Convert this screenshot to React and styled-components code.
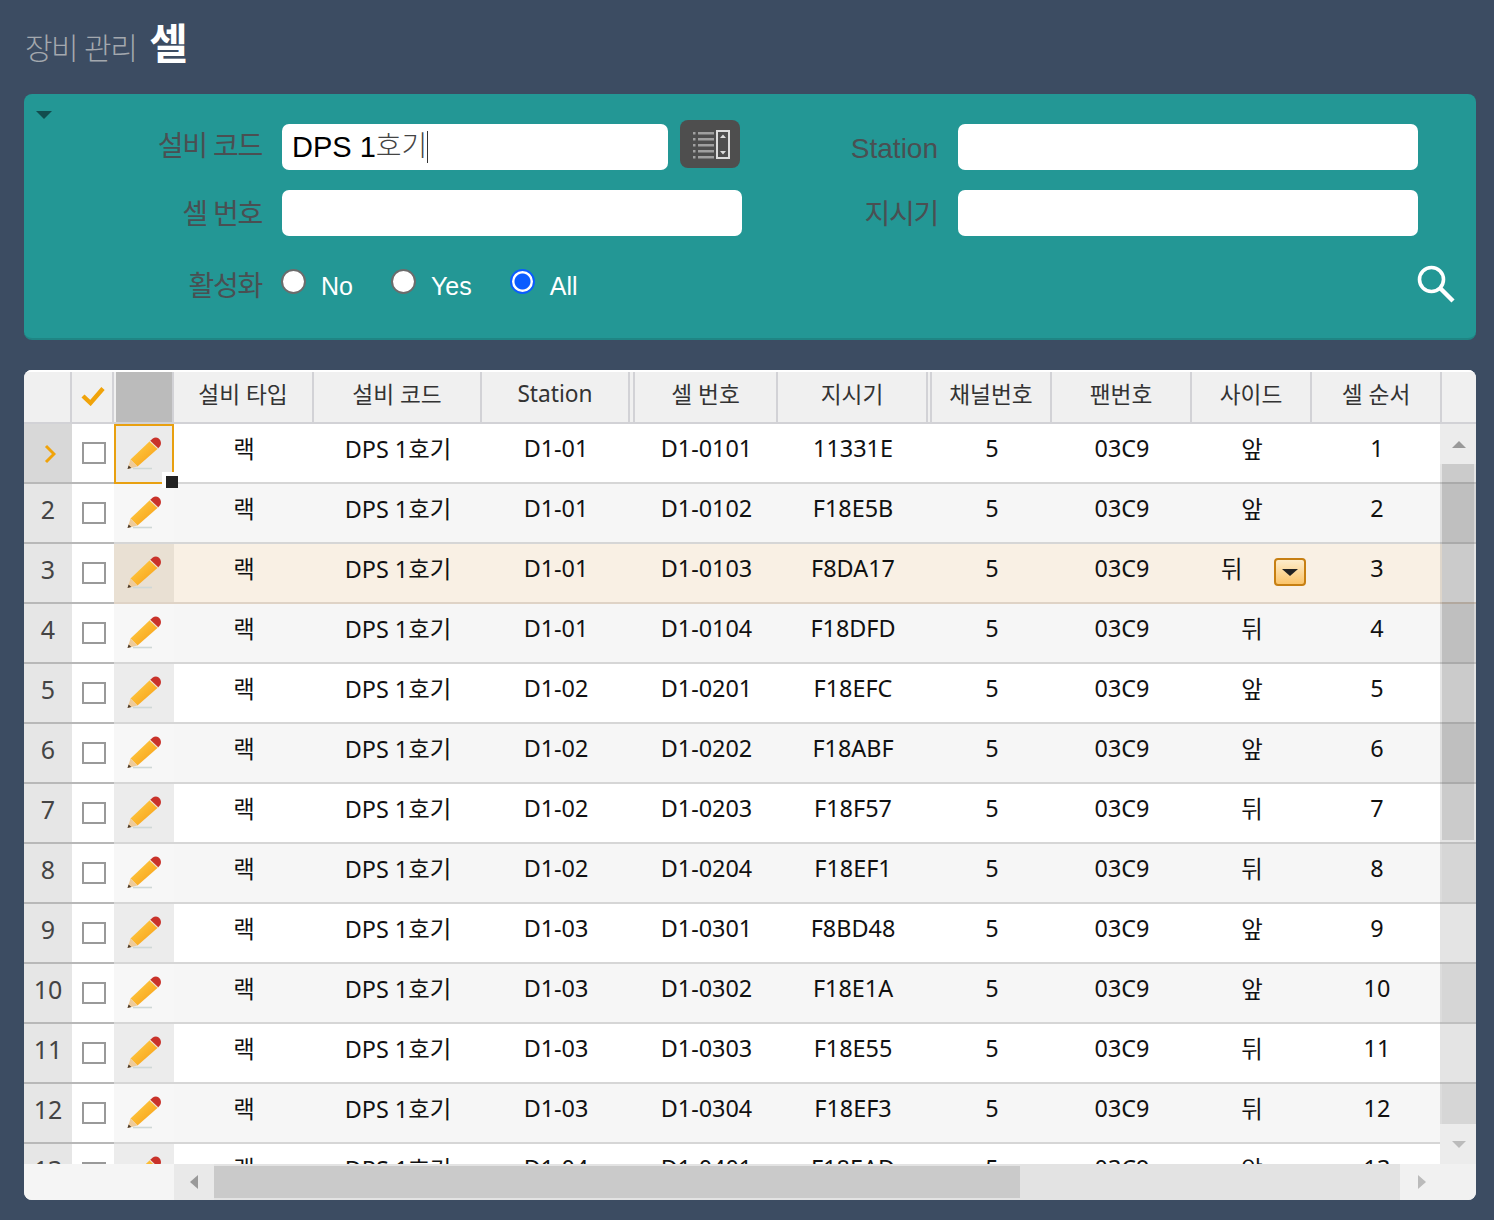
import React from "react";
import styled, { createGlobalStyle, css } from "styled-components";

const GlobalStyle = createGlobalStyle`
  html, body { margin: 0; padding: 0; background: #3c4c62; }
  * { box-sizing: border-box; }
`;

const LABEL_FONT = `"Liberation Sans", "Noto Sans CJK KR", sans-serif`;
const GRID_FONT = `"Noto Sans", "Noto Sans CJK KR", sans-serif`;
const COLS = "48px 42px 60px 140px 168px 148px 5px 143px 150px 4px 120px 140px 120px 130px 34px";

const Page = styled.div`
  width: 1494px;
  height: 1220px;
  padding: 0 18px 20px 24px;
  background: #3c4c62;
  display: flex;
  flex-direction: column;
`;
const Title = styled.h1`
  height: 94px;
  margin: 0;
  padding: 10px 0 0 1px;
  display: flex;
  align-items: baseline;
  gap: 13px;
  font-family: ${LABEL_FONT};
`;
const Crumb = styled.span`
  font-size: 30px;
  font-weight: 300;
  letter-spacing: -1.5px;
  color: #a3a8ae;
`;
const Current = styled.span`
  font-size: 42px;
  font-weight: 700;
  letter-spacing: -1px;
  color: #ffffff;
`;
const Panel = styled.section`
  position: relative;
  height: 246px;
  padding: 30px 21px 0 0;
  background: #239795;
  border-bottom: 2px solid #1f8584;
  border-radius: 8px;
  display: grid;
  grid-template-columns: 238px 460px 176px 460px 1fr;
  grid-auto-rows: 46px;
  column-gap: 20px;
  row-gap: 20px;
  font-family: ${LABEL_FONT};
`;
const Collapse = styled.span`
  position: absolute;
  left: 12px;
  top: 17px;
  width: 0;
  height: 0;
  border-left: 8px solid transparent;
  border-right: 8px solid transparent;
  border-top: 8px solid #124c4e;
`;
const Label = styled.label`
  justify-self: end;
  align-self: center;
  font-size: 28px;
  letter-spacing: ${(p) => (p.$latin ? "0" : "-1.3px")};
  color: #4a4f52;
  padding-top: ${(p) => (p.$tight ? "0" : "4px")};
  line-height: 46px;
`;
const FieldGroup = styled.div`
  display: flex;
  align-items: flex-start;
  gap: 12px;
`;
const Field = styled.div`
  width: ${(p) => p.$width || 460}px;
  height: 46px;
  padding-left: 10px;
  background: #ffffff;
  border-radius: 7px;
  display: flex;
  align-items: center;
  font-size: 29px;
  color: #000000;
  white-space: pre;
`;
const Composing = styled.span`
  font-weight: 300;
  font-size: 28px;
  color: #444444;
  border-right: 1px solid #333333;
  line-height: 32px;
`;
const ListButton = styled.button`
  width: 60px;
  height: 48px;
  margin-top: -4px;
  padding: 0;
  border: 0;
  border-radius: 8px;
  background: #4e4e4e;
  display: flex;
  align-items: center;
  justify-content: center;
`;
const RadioLine = styled.div`
  grid-column: 2 / 4;
  margin-top: 13px;
  margin-left: -1px;
  display: flex;
  gap: 38px;
  align-items: center;
`;
const RadioItem = styled.label`
  display: flex;
  align-items: center;
  gap: 15px;
  color: #ffffff;
  font-size: 25px;
`;
const RadioMark = styled.span`
  width: 25px;
  height: 25px;
  margin-top: -8px;
  border-radius: 50%;
  background: #ffffff;
  border: 2px solid #6c6c6c;
  ${(p) =>
    p.$checked &&
    css`
      border: 2px solid #0a5cff;
      background: radial-gradient(circle, #0a5cff 0 7.5px, #ffffff 8.5px);
    `}
`;
const RadioText = styled.span`
  line-height: 30px;
`;
const LabelLow = styled(Label)`
  margin-top: 11px;
`;
const SearchButton = styled.button`
  grid-column: 4 / 6;
  justify-self: end;
  margin-top: 9px;
  padding: 0;
  width: 38px;
  height: 38px;
  background: none;
  border: 0;
`;

const Grid = styled.section`
  margin-top: 30px;
  height: 830px;
  border-radius: 8px;
  overflow: hidden;
  background: #f5f5f5;
  font-family: ${GRID_FONT};
`;
const HeaderRow = styled.div`
  height: 54px;
  display: grid;
  grid-template-columns: ${COLS};
  background: #f0f0f0;
  border-top: 2px solid #ffffff;
  border-bottom: 2px solid #d2d2d6;
`;
const HeaderCell = styled.div`
  display: flex;
  align-items: center;
  justify-content: center;
  padding-bottom: 8px;
  font-size: 22.7px;
  color: #333333;
  border-right: 2px solid #d2d2d6;
`;
const HeaderEdit = styled(HeaderCell)`
  padding: 0 0 0 2px;
  align-items: stretch;
`;
const HeaderCheck = styled(HeaderCell)`
  padding: 0 0 2px 2px;
`;
const GrayBlock = styled.div`
  width: 56px;
  background: #bbbbbb;
`;
const HeaderFill = styled.div``;
const Body = styled.div`
  position: relative;
  height: 740px;
  overflow: hidden;
  background: #ffffff;
`;
const Row = styled.div`
  height: 60px;
  display: grid;
  grid-template-columns: ${COLS};
  background: ${(p) => (p.$active ? "#f9f0e4" : p.$alt ? "#f6f6f6" : "#ffffff")};
  border-bottom: 2px solid ${(p) => (p.$active ? "#dfd3c6" : "#d6d6d6")};
`;
const lead = css`
  height: 60px;
  border-bottom: 2px solid #b8b8b8;
  display: flex;
  align-items: center;
  justify-content: center;
`;
const RowHead = styled.div`
  ${lead}
  background: ${(p) => (p.$current ? "#d8d8d8" : "#e6e6e6")};
  padding: ${(p) => (p.$current ? "2px 0 0 4px" : "0 0 8px")};
  font-size: 25px;
  color: #444444;
`;
const CheckCell = styled.div`
  ${lead}
  background: #ffffff;
`;
const Checkbox = styled.span`
  width: 24px;
  height: 22px;
  margin-left: 2px;
  background: #ffffff;
  border: 2px solid #999999;
`;
const EditCell = styled.div`
  position: relative;
  height: ${(p) => (p.$selected ? "60px" : "58px")};
  z-index: ${(p) => (p.$selected ? 2 : "auto")};
  display: flex;
  align-items: center;
  justify-content: center;
  padding: 0 0 0 2px;
  background: ${(p) => (p.$active ? "#e9e0d3" : p.$selected ? "#ebebeb" : p.$alt ? "#f7f7f7" : "#ececec")};
  border: ${(p) => (p.$selected ? "2px solid #e8a010" : "0")};
`;
const Handle = styled.span`
  position: absolute;
  right: -6px;
  bottom: -6px;
  width: 16px;
  height: 16px;
  background: #222222;
  border: solid #ffffff;
  border-width: 4px 0 0 4px;
`;
const DataCell = styled.div`
  display: flex;
  align-items: center;
  justify-content: center;
  padding-bottom: 12px;
  font-size: 23.4px;
  color: #111111;
`;
const EditingCell = styled(DataCell)`
  justify-content: space-between;
  padding: 0 6px 12px 29px;
`;
const Combo = styled.span`
  width: 32px;
  height: 28px;
  margin-top: 8px;
  border: 2px solid #c77f12;
  border-radius: 4px;
  background: linear-gradient(#fdeccb, #fbc46a);
  display: flex;
  align-items: center;
  justify-content: center;
  &::after {
    content: "";
    border-left: 8px solid transparent;
    border-right: 8px solid transparent;
    border-top: 7px solid #222222;
  }
`;
const Spacer = styled.div``;
const Fill = styled.div`
  height: 58px;
  background: ${(p) => (p.$alt ? "#f0f0f0" : "#ffffff")};
`;

const VBar = styled.div`
  position: absolute;
  top: 0;
  right: 0;
  bottom: 0;
  width: 36px;
  display: flex;
  flex-direction: column;
  z-index: 1;
`;
const VEnd = styled.div`
  height: 40px;
  background: #ececec;
  display: flex;
  justify-content: center;
  padding: 17px 0 0 2px;
`;
const Arrow = styled.span`
  width: 0;
  height: 0;
  ${(p) =>
    p.$dir === "up" &&
    css`
      border-left: 7px solid transparent;
      border-right: 7px solid transparent;
      border-bottom: 7px solid #999999;
    `}
  ${(p) =>
    p.$dir === "down" &&
    css`
      border-left: 7px solid transparent;
      border-right: 7px solid transparent;
      border-top: 7px solid #bbbbbb;
    `}
  ${(p) =>
    p.$dir === "left" &&
    css`
      border-top: 7px solid transparent;
      border-bottom: 7px solid transparent;
      border-right: 8px solid #999999;
    `}
  ${(p) =>
    p.$dir === "right" &&
    css`
      border-top: 7px solid transparent;
      border-bottom: 7px solid transparent;
      border-left: 8px solid #bbbbbb;
    `}
`;
const VTrack = styled.div`
  height: 660px;
  background: rgba(0, 0, 0, 0.105);
`;
const VThumb = styled.div`
  height: 376px;
  margin: 0 2px;
  background: rgba(0, 0, 0, 0.105);
`;
const HBar = styled.div`
  height: 36px;
  display: flex;
`;
const HCorner = styled.div`
  width: 150px;
  background: #f5f5f5;
`;
const HLeft = styled.div`
  width: 40px;
  background: #e9e9e9;
  display: flex;
  align-items: center;
  padding-left: 16px;
`;
const HTrack = styled.div`
  width: 1186px;
  padding: 2px 0;
  background: #e3e3e3;
`;
const HThumb = styled.div`
  width: 806px;
  height: 100%;
  background: #cacaca;
`;
const HRight = styled.div`
  width: 76px;
  background: #f1f1f1;
  display: flex;
  align-items: center;
  padding-left: 18px;
`;

const PencilIcon = () => (
  <svg width="36" height="34" viewBox="0 0 36 34" aria-hidden="true">
    <defs>
      <linearGradient id="pb" x1="0" y1="0" x2="1" y2="1">
        <stop offset="0" stopColor="#ffd24a" />
        <stop offset="1" stopColor="#f79a12" />
      </linearGradient>
    </defs>
    <path d="M6 31.5H25" stroke="#cfd8d6" strokeWidth="1.6" />
    <path d="M3.5 22.5 L23 4 L31 11.5 L10.5 29.5 Z" fill="url(#pb)" />
    <path d="M0.5 32 L3.5 22.5 L10.5 29.5 Z" fill="#eecb9a" />
    <path d="M0.5 32 L1.6 28.4 L4.4 31 Z" fill="#4a3a2a" />
    <path d="M23 4 L25.8 1.6 Q27 .5 29 .5 Q33.5 1 34 6 Q34 8 32.8 9.6 L31 11.5 Z" fill="#c9322a" />
    <path d="M22.4 4.6 L30.4 12 L31.2 11.2 L23.3 3.8 Z" fill="#efe3d2" />
  </svg>
);
const CheckMark = () => (
  <svg width="24" height="20" viewBox="0 0 24 20" aria-hidden="true">
    <path d="M2 10 L9.5 17 L22 2.5" fill="none" stroke="#f0a30a" strokeWidth="4.4" />
  </svg>
);
const Chevron = () => (
  <svg width="12" height="20" viewBox="0 0 12 20" aria-hidden="true">
    <path d="M2 2 L10 10 L2 18" fill="none" stroke="#f0a30a" strokeWidth="3" />
  </svg>
);
const ListIcon = () => (
  <svg width="40" height="34" viewBox="0 0 40 34" aria-hidden="true">
    {[5, 11, 17, 23, 29].map((y) => (
      <g key={y}>
        <rect x="3" y={y} width="2.5" height="2.5" fill="#a0a0a0" />
        <rect x="8" y={y} width="16" height="2.5" fill="#a0a0a0" />
      </g>
    ))}
    <rect x="27" y="4" width="12" height="27" fill="none" stroke="#dcdcdc" strokeWidth="2" />
    <path d="M30 11 L33 7.5 L36 11 Z M30 24 L33 27.5 L36 24 Z" fill="#dcdcdc" />
  </svg>
);
const SearchIcon = () => (
  <svg width="38" height="38" viewBox="0 0 38 38" aria-hidden="true">
    <circle cx="14.5" cy="14.5" r="12" fill="none" stroke="#ffffff" strokeWidth="3.6" />
    <path d="M23.5 23.5 L36 36" stroke="#ffffff" strokeWidth="4.4" />
  </svg>
);

const HEAD = ["설비 타입", "설비 코드", "Station", null, "셀 번호", "지시기", null, "채널번호", "팬번호", "사이드", "셀 순서"];
const RAW = [
  ["D1-01", "D1-0101", "11331E", "앞"],
  ["D1-01", "D1-0102", "F18E5B", "앞"],
  ["D1-01", "D1-0103", "F8DA17", "뒤"],
  ["D1-01", "D1-0104", "F18DFD", "뒤"],
  ["D1-02", "D1-0201", "F18EFC", "앞"],
  ["D1-02", "D1-0202", "F18ABF", "앞"],
  ["D1-02", "D1-0203", "F18F57", "뒤"],
  ["D1-02", "D1-0204", "F18EF1", "뒤"],
  ["D1-03", "D1-0301", "F8BD48", "앞"],
  ["D1-03", "D1-0302", "F18E1A", "앞"],
  ["D1-03", "D1-0303", "F18E55", "뒤"],
  ["D1-03", "D1-0304", "F18EF3", "뒤"],
  ["D1-04", "D1-0401", "F18EAD", "앞"],
];

export default function App() {
  return (
    <Page>
      <GlobalStyle />
      <Title>
        <Crumb>장비 관리</Crumb>
        <Current>셀</Current>
      </Title>
      <Panel>
        <Collapse />
        <Label $tight>설비 코드</Label>
        <FieldGroup>
          <Field $width={386}>
            DPS 1<Composing>호기</Composing>
          </Field>
          <ListButton aria-label="목록">
            <ListIcon />
          </ListButton>
        </FieldGroup>
        <Label $latin>Station</Label>
        <Field />
        <span />
        <Label>셀 번호</Label>
        <Field />
        <Label>지시기</Label>
        <Field />
        <span />
        <LabelLow>활성화</LabelLow>
        <RadioLine>
          <RadioItem>
            <RadioMark />
            <RadioText>No</RadioText>
          </RadioItem>
          <RadioItem>
            <RadioMark />
            <RadioText>Yes</RadioText>
          </RadioItem>
          <RadioItem>
            <RadioMark $checked />
            <RadioText>All</RadioText>
          </RadioItem>
        </RadioLine>
        <SearchButton aria-label="검색">
          <SearchIcon />
        </SearchButton>
      </Panel>
      <Grid>
        <HeaderRow>
          <HeaderCell />
          <HeaderCheck>
            <CheckMark />
          </HeaderCheck>
          <HeaderEdit>
            <GrayBlock />
          </HeaderEdit>
          {HEAD.map((h, i) => (
            <HeaderCell key={i}>{h}</HeaderCell>
          ))}
          <HeaderFill />
        </HeaderRow>
        <Body>
          {RAW.map(([station, cell, ind, side], i) => {
            const alt = i % 2 === 1;
            const active = i === 2;
            const n = i + 1;
            return (
              <Row key={n} $alt={alt} $active={active}>
                <RowHead $current={i === 0}>{i === 0 ? <Chevron /> : n}</RowHead>
                <CheckCell>
                  <Checkbox />
                </CheckCell>
                <EditCell $alt={alt} $active={active} $selected={i === 0}>
                  <PencilIcon />
                  {i === 0 && <Handle />}
                </EditCell>
                <DataCell>랙</DataCell>
                <DataCell>DPS 1호기</DataCell>
                <DataCell>{station}</DataCell>
                <Spacer />
                <DataCell>{cell}</DataCell>
                <DataCell>{ind}</DataCell>
                <Spacer />
                <DataCell>5</DataCell>
                <DataCell>03C9</DataCell>
                {active ? (
                  <EditingCell>
                    {side}
                    <Combo />
                  </EditingCell>
                ) : (
                  <DataCell>{side}</DataCell>
                )}
                <DataCell>{n}</DataCell>
                <Fill $alt={alt && !active} />
              </Row>
            );
          })}
          <VBar>
            <VEnd>
              <Arrow $dir="up" />
            </VEnd>
            <VTrack>
              <VThumb />
            </VTrack>
            <VEnd>
              <Arrow $dir="down" />
            </VEnd>
          </VBar>
        </Body>
        <HBar>
          <HCorner />
          <HLeft>
            <Arrow $dir="left" />
          </HLeft>
          <HTrack>
            <HThumb />
          </HTrack>
          <HRight>
            <Arrow $dir="right" />
          </HRight>
        </HBar>
      </Grid>
    </Page>
  );
}
